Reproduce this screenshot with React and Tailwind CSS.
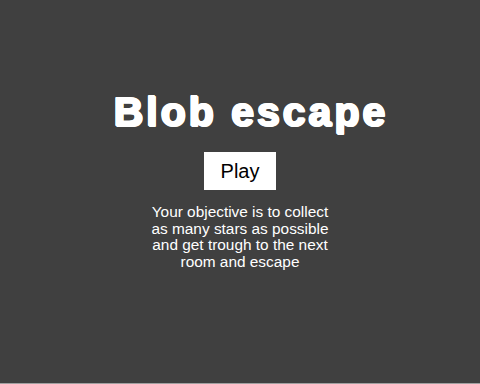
import React from "react";

const App = () => {
  return (
    <div className="w-[480px] h-[384px] bg-[#404040] flex flex-col border-b border-[#a0a0a0] overflow-hidden font-['Liberation_Sans',Arial,sans-serif]">
      <div className="flex flex-col items-center pt-[92px]">
        <h1 className="ml-[22px] text-[41px] leading-[41px] font-bold text-white tracking-[3px] [text-shadow:1px_0_white,-1px_0_white,0_1px_white,0_-1px_white,1px_1px_white,-1px_-1px_white] whitespace-nowrap">
          Blob escape
        </h1>

        <button className="mt-[19px] bg-white text-black text-[20px] leading-[23px] px-[17px] py-[7.5px]">
          Play
        </button>

        <p className="mt-[14px] text-white text-center text-[15.4px] leading-[16.7px] whitespace-nowrap">
          Your objective is to collect
          <br />
          as many stars as possible
          <br />
          and get trough to the next
          <br />
          room and escape
        </p>
      </div>
    </div>
  );
};

export default App;
